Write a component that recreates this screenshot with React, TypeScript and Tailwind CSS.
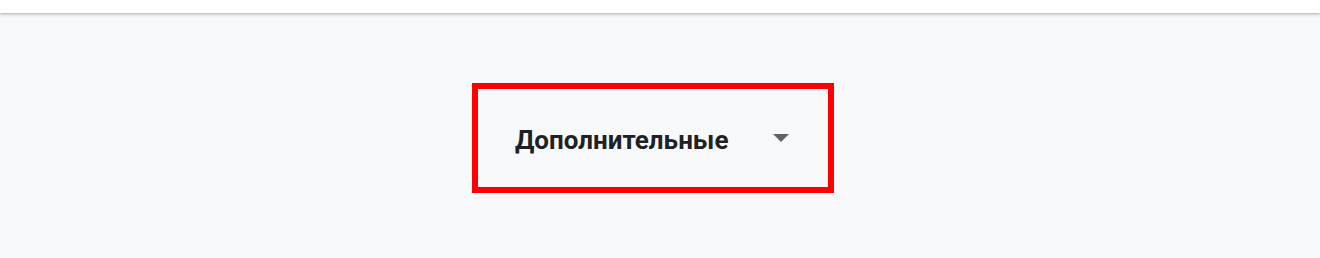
export default function App() {
  return (
    <div className="min-h-[258px] w-full bg-[#f8f9fa] font-['Roboto',sans-serif]">
      {/* top bar with shadow */}
      <div className="h-[13px] bg-white shadow-[0_1px_3px_rgba(60,64,67,0.45)]" />

      <div className="pl-[472px] pt-[70px]">
        <div className="flex h-[110px] w-[362px] items-center border-[6px] border-[#ff0000] pl-[37px]">
          <span className="mt-[4px] text-[26px] font-bold leading-none text-[#202124]">
            Дополнительные
          </span>
          <svg
            className="ml-[45px]"
            width="16"
            height="8"
            viewBox="0 0 16 8"
            aria-hidden="true"
          >
            <path d="M0 0 L16 0 L8 8 Z" fill="#5f6368" />
          </svg>
        </div>
      </div>
    </div>
  );
}
